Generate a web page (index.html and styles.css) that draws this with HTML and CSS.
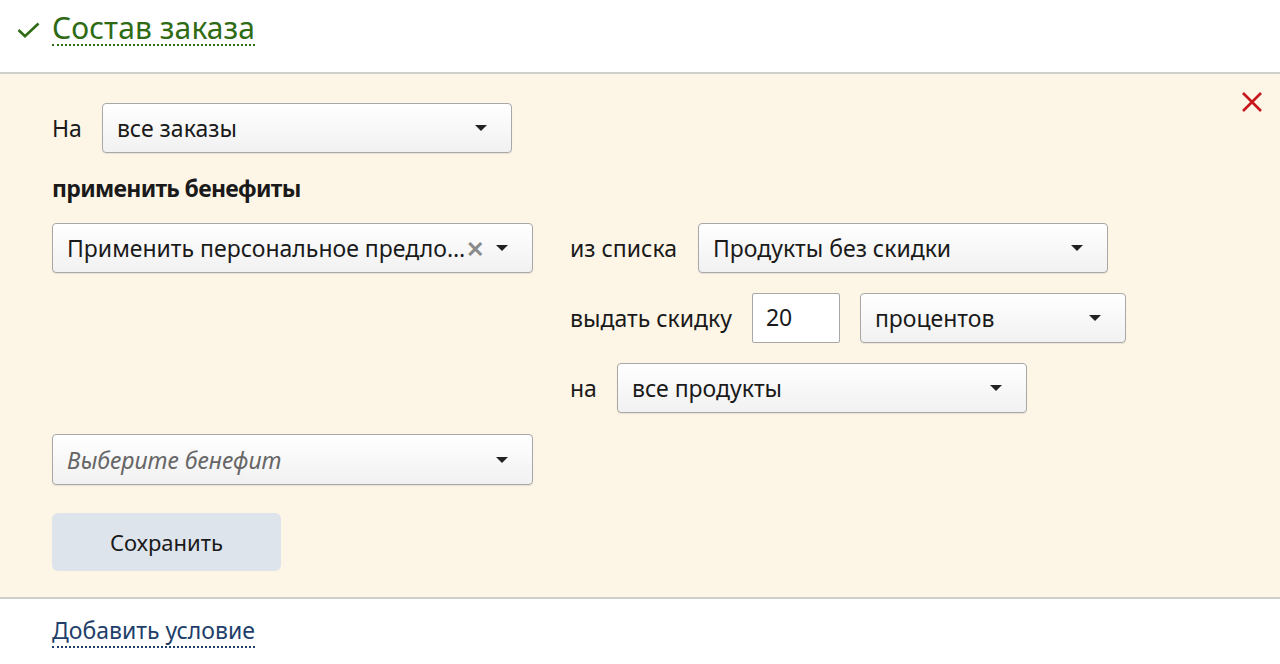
FILE: index.html
```html
<!DOCTYPE html>
<html lang="ru">
<head>
<meta charset="utf-8">
<title>Состав заказа</title>
<link rel="stylesheet" href="styles.css">
</head>
<body>
<header class="head">
  <svg class="check" width="23" height="16" viewBox="0 0 23 16"><path d="M1.5 8 L8 14.2 L21.5 1.5" fill="none" stroke="#2f6b14" stroke-width="2.6"/></svg>
  <span class="title">Состав заказа</span>
</header>
<section class="panel">
  <svg class="close" width="22" height="22" viewBox="0 0 22 22"><path d="M2 2 L20 20 M20 2 L2 20" stroke="#c8161d" stroke-width="2.6" fill="none"/></svg>
  <div class="row">
    <span class="lbl">На</span>
    <div class="select w410"><span class="val">все заказы</span><span class="arrow"></span></div>
  </div>
  <div class="bold">применить бенефиты</div>
  <div class="benefit">
    <div class="select w481"><span class="val">Применить персональное предло…</span><span class="clear">✕</span><span class="arrow"></span></div>
    <div class="params">
      <div class="row">
        <span class="lbl">из списка</span>
        <div class="select w410"><span class="val">Продукты без скидки</span><span class="arrow"></span></div>
      </div>
      <div class="row">
        <span class="lbl">выдать скидку</span>
        <div class="input">20</div>
        <div class="select w266"><span class="val">процентов</span><span class="arrow"></span></div>
      </div>
      <div class="row">
        <span class="lbl">на</span>
        <div class="select w410"><span class="val">все продукты</span><span class="arrow"></span></div>
      </div>
    </div>
  </div>
  <div class="select w481 placeholder"><span class="val">Выберите бенефит</span><span class="arrow"></span></div>
  <button class="save">Сохранить</button>
</section>
<footer class="foot"><span class="add">Добавить условие</span></footer>
</body>
</html>
```
FILE: styles.css
```css
* { box-sizing: border-box; }
html, body { margin: 0; padding: 0; background: #fff; }
body { font-family: "Noto Sans", "Open Sans", sans-serif; font-size: 23px; color: #1a1a1a; }
.head { height: 72px; display: flex; align-items: flex-start; padding: 12px 0 0 17px; gap: 12px; }
.check { margin-top: 10px; }
.title { font-size: 30px; color: #2f6b14; border-bottom: 2px dotted #2f6b14; line-height: 32px; letter-spacing: 0.1px; }
.panel { position: relative; background: #fdf6e7; border-top: 2px solid #cfcfcc; border-bottom: 2px solid #cfcfcc; padding: 29px 52px 26px 52px; display: flex; flex-direction: column; align-items: flex-start; }
.close { position: absolute; right: 17px; top: 17px; }
.row { display: flex; align-items: center; gap: 20px; height: 50px; }
.lbl { white-space: nowrap; }
.bold { font-weight: bold; margin-top: 20px; height: 30px; line-height: 30px; letter-spacing: -0.7px; }
.benefit { display: flex; gap: 37px; margin-top: 20px; }
.params { display: flex; flex-direction: column; gap: 20px; }
.params .row:first-child { gap: 21px; }
.select { height: 50px; border: 1px solid #a8a8a8; border-radius: 4px; background: linear-gradient(#ffffff, #f1f1f1); display: flex; align-items: center; padding: 0 24px 0 14px; white-space: nowrap; box-shadow: 0 1px 1px rgba(0,0,0,0.08); }
.val { flex: 1; overflow: hidden; }
.arrow { width: 0; height: 0; border-left: 6px solid transparent; border-right: 6px solid transparent; border-top: 6px solid #222; }
.clear { color: #8a8a8a; font-size: 22px; font-weight: bold; margin-right: 12px; }
.w410 { width: 410px; }
.w481 { width: 481px; }
.w266 { width: 266px; }
.input { width: 88px; height: 50px; border: 1px solid #a8a8a8; border-radius: 2px; background: #fff; padding: 6px 13px; line-height: 34px; }
.placeholder { margin-top: 21px; height: 51px; }
.placeholder .val { font-style: italic; color: #666; }
.save { margin-top: 28px; width: 229px; height: 58px; border: 0; border-radius: 6px; background: #dde4ec; font-family: inherit; font-size: 22px; color: #1a1a1a; }
.foot { padding: 15px 52px; }
.add { color: #1f3f6a; border-bottom: 2px dotted #1f3f6a; line-height: 32px; }
```
